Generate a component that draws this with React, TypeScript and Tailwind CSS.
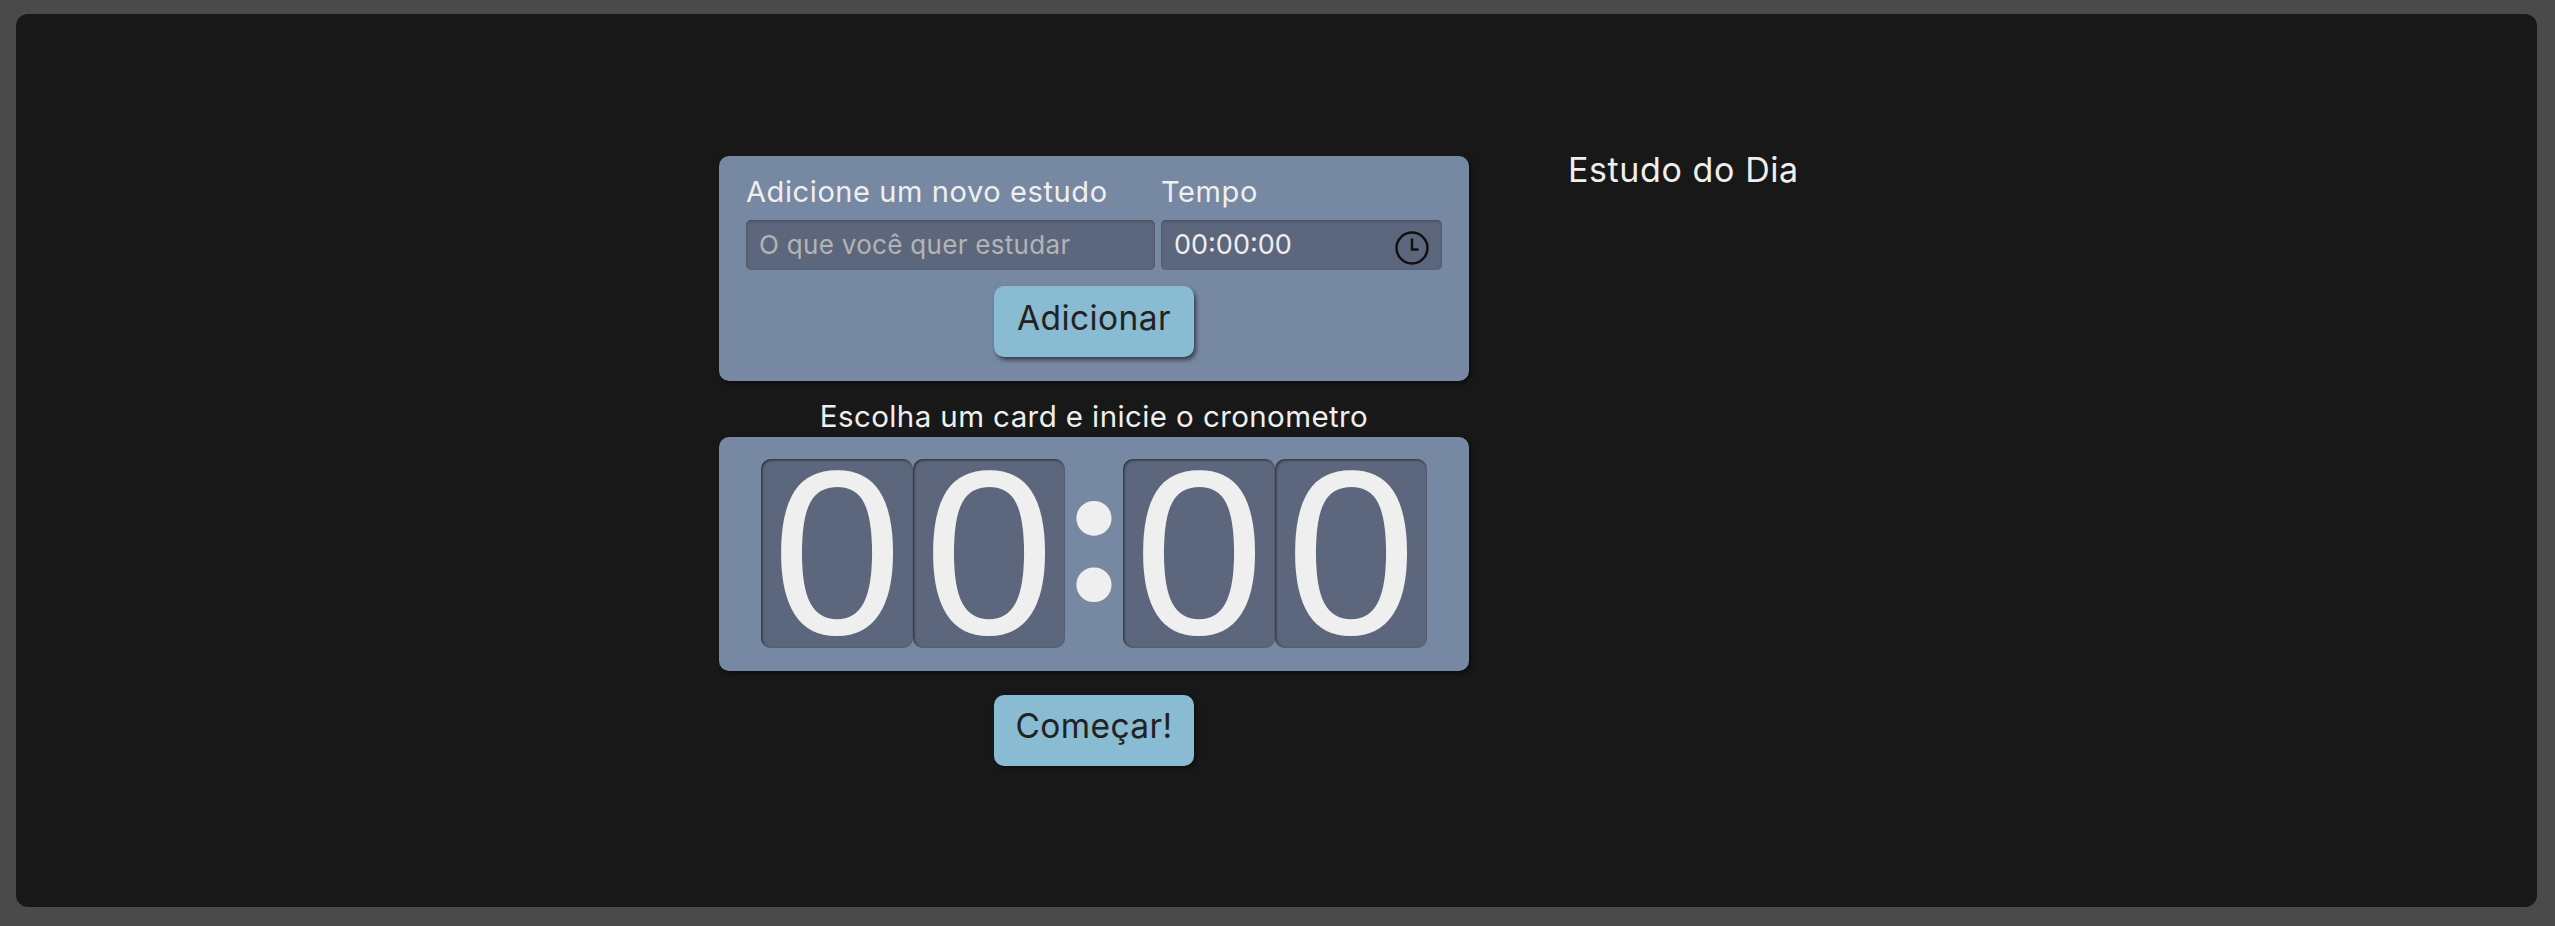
const digitClass =
  'flex h-[189px] w-[152px] items-center justify-center rounded-[10px] bg-[#5c677d] pb-[1px] font-["Liberation_Sans",sans-serif] text-[234px] leading-none text-[#efefef] shadow-[inset_1px_1px_3px_rgba(0,0,0,0.6)]';

const buttonClass =
  'flex h-[71px] w-[200px] items-start justify-center rounded-[10px] bg-[#89bbd2] text-[33.5px] leading-[48px] tracking-[0.4px] text-[#222222]';

function ClockIcon() {
  return (
    <svg width="36" height="36" viewBox="0 0 36 36" fill="none" stroke="#111111" className="mt-[5px] shrink-0">
      <circle cx="18" cy="18" r="15.5" strokeWidth="2.5" />
      <path d="M18 8.5V19.5H24.5" strokeWidth="2.5" />
    </svg>
  );
}

export default function App() {
  return (
    <div className='h-[926px] w-full bg-[#4a4a4a] pb-[19px] pl-4 pr-[18px] pt-[14px] font-["Inter",sans-serif]'>
      <div className="flex h-full gap-[99px] rounded-xl bg-[#181818] pl-[703px] pt-[142px]">
        <div className="flex w-[750px] flex-col items-center">
          {/* New study form */}
          <form className="h-[225px] w-full rounded-[10px] bg-[#7788a2] px-[27px] pt-[8px] shadow-[2px_2px_4px_rgba(0,0,0,0.5)]">
            <div className="flex gap-[6px]">
              <div className="w-[409px]">
                <label className="block text-[29px] leading-[56px] tracking-[0.6px] text-[#efefef]">
                  Adicione um novo estudo
                </label>
                <input
                  placeholder="O que você quer estudar"
                  className="h-[50px] w-full rounded-[5px] bg-[#5c677d] px-[13px] pb-[2px] text-[26px] tracking-[0.3px] text-[#efefef] shadow-[inset_0_1px_3px_rgba(0,0,0,0.3)] outline-none placeholder:text-[#b4b4b4]"
                />
              </div>
              <div className="w-[281px]">
                <label className="block text-[29px] leading-[56px] tracking-[0.6px] text-[#efefef]">Tempo</label>
                <div className="flex h-[50px] items-center justify-between rounded-[5px] bg-[#5c677d] pl-[13px] pr-[12px] text-[27px] text-[#efefef] shadow-[inset_0_1px_3px_rgba(0,0,0,0.3)]">
                  <span>00:00:00</span>
                  <ClockIcon />
                </div>
              </div>
            </div>
            <div className="mt-4 flex justify-center">
              <button type="button" className={`${buttonClass} pt-[8px] shadow-[2px_3px_4px_rgba(0,0,0,0.55)]`}>
                Adicionar
              </button>
            </div>
          </form>

          <h2 className="mt-[15px] text-[29.5px] leading-[41px] tracking-[0.4px] text-[#efefef]">
            Escolha um card e inicie o cronometro
          </h2>

          {/* Timer */}
          <div className="flex h-[234px] w-full items-center justify-center rounded-[10px] bg-[#7788a2] pb-[2px] shadow-[2px_2px_4px_rgba(0,0,0,0.5)]">
            <span className={digitClass}>0</span>
            <span className={digitClass}>0</span>
            <span className="flex w-[58px] justify-center pb-[44px] text-[190px] font-extrabold leading-[189px] text-[#efefef]">
              :
            </span>
            <span className={digitClass}>0</span>
            <span className={digitClass}>0</span>
          </div>

          <button type="button" className={`${buttonClass} mt-6 pt-[7px] shadow-[2px_2px_4px_rgba(0,0,0,0.4)]`}>
            Começar!
          </button>
        </div>

        <h2 className="text-[34px] leading-[28px] tracking-[0.6px] text-[#efefef]">Estudo do Dia</h2>
      </div>
    </div>
  );
}
